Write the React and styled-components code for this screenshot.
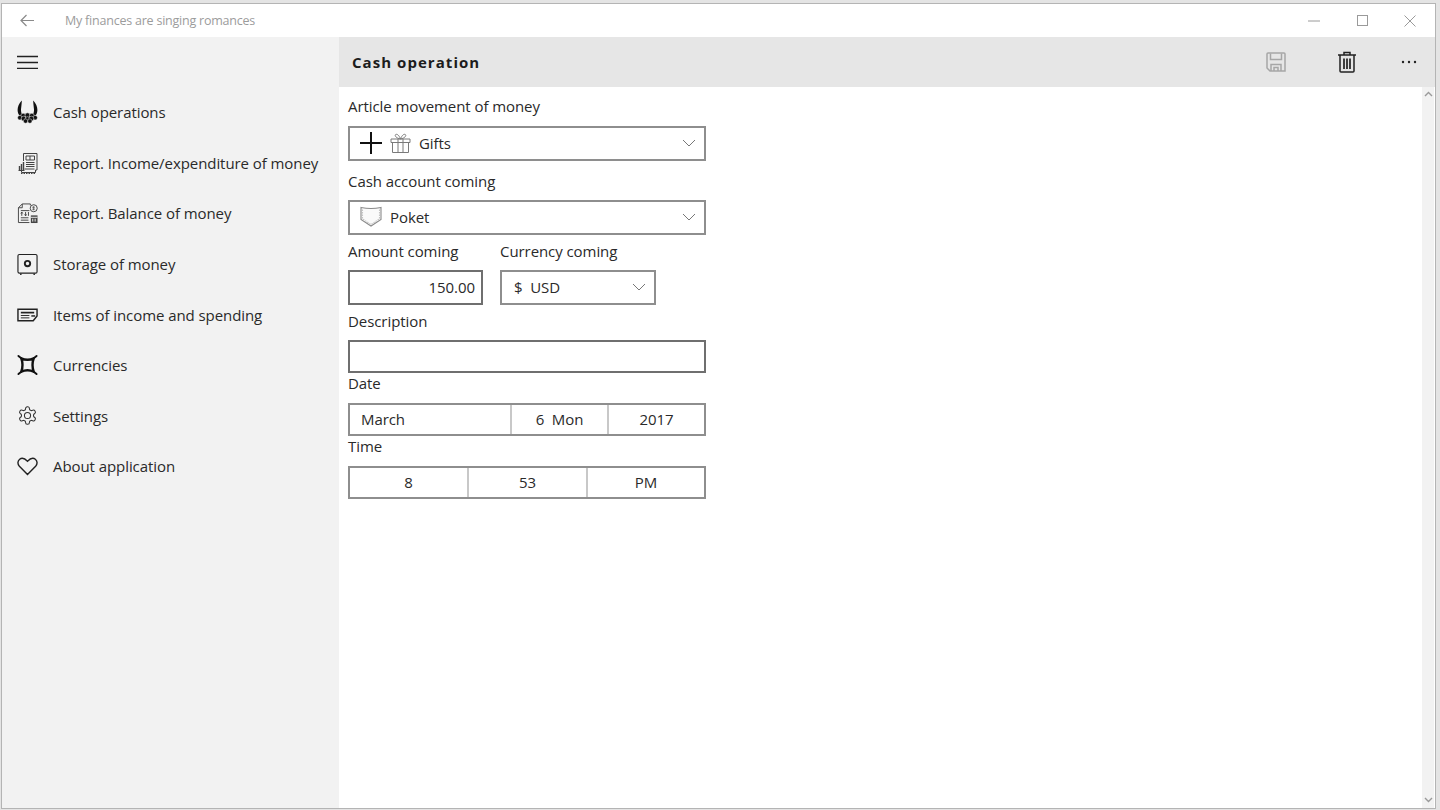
import React from 'react';
import styled, { createGlobalStyle } from 'styled-components';

const Global = createGlobalStyle`
  html, body { margin: 0; height: 100%; background: #e4e4e4; overflow: hidden; }
  * { box-sizing: border-box; }
  #root { height: 100%; }
`;
const Desktop = styled.div`
  height: 810px;
  padding: 4px 5px 2px 2px;
  font-family: 'Open Sans', 'Noto Sans', sans-serif;
  font-size: 15px;
  letter-spacing: -0.07px;
  color: #2a2a2a;
`;
const Window = styled.div`
  height: 100%;
  display: flex;
  flex-direction: column;
  background: #fff;
  box-shadow: 0 0 0 1px #b4b4b4;
`;
const TitleBar = styled.div`
  height: 33px;
  flex: none;
  display: flex;
  align-items: center;
  color: #9c9c9c;
`;
const BackButton = styled.div`
  width: 63px;
  padding-left: 18px;
  display: flex;
  align-items: center;
`;
const AppName = styled.div`
  flex: 1;
  font-size: 12.5px;
  letter-spacing: -0.22px;
  margin-bottom: 1px;
`;
const WindowButtons = styled.div`
  display: flex;
  align-items: center;
  margin-right: 1px;
`;
const WindowButton = styled.div`
  width: 48px;
  display: flex;
  justify-content: center;
`;
const Body = styled.div`
  flex: 1;
  display: flex;
  min-height: 0;
`;
const Sidebar = styled.nav`
  width: 337px;
  flex: none;
  background: #f2f2f2;
`;
const Burger = styled.div`
  height: 50px;
  padding-left: 15px;
  display: flex;
  align-items: center;
`;
const MenuItem = styled.div`
  height: 50.6px;
  display: flex;
  align-items: center;
  gap: 15px;
  padding-left: 15px;
`;
const MenuIcon = styled.span`
  width: 21px;
  height: 24px;
  display: flex;
  align-items: center;
  justify-content: center;
  flex: none;
`;
const Main = styled.main`
  flex: 1;
  display: flex;
  flex-direction: column;
  min-width: 0;
`;
const CommandBar = styled.div`
  height: 50px;
  flex: none;
  background: #e6e6e6;
  display: flex;
  align-items: center;
  padding-left: 13px;
`;
const PageTitle = styled.h1`
  flex: 1;
  margin: 0;
  font-size: 15px;
  font-weight: 700;
  letter-spacing: 1.05px;
  color: #1c1c1c;
`;
const Commands = styled.div`
  display: flex;
  align-items: center;
`;
const Command = styled.div`
  width: ${p => p.$w}px;
  display: flex;
  justify-content: center;
`;
const Scroller = styled.div`
  flex: 1;
  display: flex;
  min-height: 0;
`;
const Form = styled.div`
  flex: 1;
  padding: 9px 0 0 9px;
`;
const Field = styled.div`
  width: ${p => p.$w || 358}px;
`;
const Label = styled.div`
  height: ${p => p.$h || 21}px;
  line-height: 21px;
  white-space: nowrap;
`;
const Box = styled.div`
  height: ${p => p.$h || 35}px;
  border: 2px solid ${p => (p.$dark ? '#6f6f6f' : '#8e8e8e')};
  background: #fff;
  display: flex;
  align-items: center;
  padding: 0 ${p => (p.$right ? 6 : 8)}px 2px ${p => p.$pl || 10}px;
  justify-content: ${p => (p.$right ? 'flex-end' : 'flex-start')};
  margin-bottom: ${p => p.$mb || 0}px;
`;
const BoxText = styled.span`
  flex: ${p => (p.$grow ? 1 : 'none')};
  margin-left: ${p => p.$ml || 0}px;
  white-space: pre;
  display: flex;
`;
const PairRow = styled.div`
  display: flex;
  gap: 17px;
  margin-bottom: 6px;
`;
const SegmentBox = styled.div`
  height: 33px;
  border: 2px solid #8e8e8e;
  display: grid;
  grid-template-columns: ${p => p.$cols};
`;
const Segment = styled.div`
  display: flex;
  align-items: center;
  justify-content: ${p => (p.$left ? 'flex-start' : 'center')};
  padding: 0 0 2px ${p => (p.$left ? 11 : 0)}px;
  white-space: pre;
  & + & { border-left: 2px solid #c8c8c8; }
`;
const Scrollbar = styled.div`
  width: 12px;
  margin-right: 1px;
  flex: none;
  background: #f2f2f2;
  display: flex;
  flex-direction: column;
  justify-content: space-between;
  align-items: center;
  padding: 4px 0 5px;
`;

const Chevron = () => (
  <svg width="14" height="8" viewBox="0 0 14 8" fill="none" stroke="#777" strokeWidth="1">
    <path d="M1 1l6 6 6-6" />
  </svg>
);
const ScrollArrow = ({ up }) => (
  <svg width="9" height="6" viewBox="0 0 9 6" fill="none" stroke="#9a9a9a" strokeWidth="1.4">
    <path d={up ? 'M1 5l3.5-3.5L8 5' : 'M1 1l3.5 3.5L8 1'} />
  </svg>
);

const CashIcon = () => (
  <svg width="22" height="24" viewBox="0 0 22 24" fill="#111">
    <path d="M5 0C1 4-.5 10 1.500 14c1 2 3 3 5.500 3.500-2-2.500-3-5-2.800-8.500C4.400 6 5.200 3 5 0zM17 0c4 4 5.500 10 3.500 14-1 2-3 3-5.500 3.500 2-2.500 3-5 2.800-8.500C17.600 6 16.800 3 17 0z" />
    <g stroke="#f2f2f2" strokeWidth=".5">
      <circle cx="6.500" cy="16" r="2.600" /><circle cx="11" cy="15.500" r="2.600" /><circle cx="15.500" cy="16" r="2.600" />
      <circle cx="3" cy="18" r="2.400" /><circle cx="19" cy="18" r="2.400" />
      <circle cx="7" cy="19" r="2.600" /><circle cx="11" cy="19.500" r="2.600" /><circle cx="15" cy="19" r="2.600" />
      <circle cx="9" cy="21.500" r="2.300" /><circle cx="13.500" cy="21.500" r="2.300" />
    </g>
  </svg>
);
const IncomeReportIcon = () => (
  <svg width="20" height="22" viewBox="0 0 20 22" fill="none" stroke="#444" strokeWidth="1">
    <path d="M5.500 9V1.500h13.500v16.500h-1.500v2.500H3.500v-2" />
    <path d="M8 4h8.500v4H8zM12 4v4M8 10.500h8.500M8 12.500h8.500M8 14.500h8.500M6.500 17h10" />
    <path d="M1.500 18v-4M3.500 18v-6M5.500 18v-8" strokeWidth="1.400" />
    <path d="M.5 18.500h6" />
    <path d="M3 21.500h14" strokeDasharray="1.500 1" />
  </svg>
);
const BalanceReportIcon = () => (
  <svg width="22" height="22" viewBox="0 0 22 22" fill="none" stroke="#444" strokeWidth="1">
    <path d="M14 3V1.500H5.500l-4 4v15.500h11.500" />
    <path d="M5.500 1.500v4h-4" />
    <path d="M4 8.500h9M4 16h8M4 18.500h8" />
    <path d="M5 10v4M5 10l-1 1.500M5 10l1 1.500M9 10v4M9 14l-1-1.500M9 14l1-1.500M12 10v4" />
    <circle cx="17.500" cy="6" r="3.700" />
    <path d="M17.500 3.800v4.400M16 5h2.500M16 7h2.500" strokeWidth=".8" />
    <rect x="14.500" y="13.500" width="7" height="8" fill="#444" stroke="none" />
    <path d="M14.500 15.500h7M16.500 17v3M19 17v3" stroke="#f2f2f2" />
  </svg>
);
const SafeIcon = () => (
  <svg width="22" height="23" viewBox="0 0 22 23" fill="none" stroke="#222">
    <rect x="1" y="1" width="20" height="19.500" rx="1.500" strokeWidth="1.200" />
    <circle cx="11" cy="10.500" r="2.800" strokeWidth="2" />
    <path d="M4 21v1.500M18 21v1.500" strokeWidth="1.500" />
  </svg>
);
const ItemsIcon = () => (
  <svg width="22" height="14" viewBox="0 0 22 14" fill="none" stroke="#222">
    <path d="M1 1h20v7l-4 5H1z" strokeWidth="1.500" />
    <path d="M4 4.500h14" strokeWidth="1.800" />
    <path d="M4 7.500h9M4 10h9" />
    <path d="M15 8h4" strokeWidth="1.500" />
  </svg>
);
const CurrencyIcon = () => (
  <svg width="22" height="22" viewBox="0 0 22 22" fill="none" stroke="#111" strokeWidth="2.500">
    <path d="M4.500 4Q11 7 17.500 4 15 11 17.500 18 11 15 4.500 18 7 11 4.500 4z" strokeLinejoin="round" />
    <path d="M1.500 1.500l3 2.500M20.500 1.500l-3 2.500M1.500 20.500l3-2.500M20.500 20.500l-3-2.500" strokeLinecap="round" strokeWidth="2" />
  </svg>
);
const GearIcon = () => (
  <svg width="25" height="25" viewBox="0 0 24 24" fill="none" stroke="#333" strokeWidth="1.200" strokeLinejoin="round">
    <path d="M12.220 2h-.44a2 2 0 0 0-2 2v.18a2 2 0 0 1-1 1.730l-.43.250a2 2 0 0 1-2 0l-.15-.080a2 2 0 0 0-2.730.730l-.22.380a2 2 0 0 0 .730 2.730l.150.100a2 2 0 0 1 1 1.720v.510a2 2 0 0 1-1 1.740l-.150.090a2 2 0 0 0-.730 2.730l.22.380a2 2 0 0 0 2.730.730l.150-.080a2 2 0 0 1 2 0l.43.250a2 2 0 0 1 1 1.730V20a2 2 0 0 0 2 2h.44a2 2 0 0 0 2-2v-.18a2 2 0 0 1 1-1.730l.43-.250a2 2 0 0 1 2 0l.150.080a2 2 0 0 0 2.730-.730l.22-.390a2 2 0 0 0-.730-2.730l-.150-.080a2 2 0 0 1-1-1.740v-.500a2 2 0 0 1 1-1.740l.150-.090a2 2 0 0 0 .730-2.730l-.22-.380a2 2 0 0 0-2.730-.730l-.150.080a2 2 0 0 1-2 0l-.43-.250a2 2 0 0 1-1-1.730V4a2 2 0 0 0-2-2z" />
    <circle cx="12" cy="12" r="3.500" />
  </svg>
);
const HeartIcon = () => (
  <svg width="22" height="19" viewBox="0 0 22 19" fill="none" stroke="#222" strokeWidth="1.500">
    <path d="M11 17.800L2.500 9.300C.3 7 .6 3.600 2.800 1.900c2.300-1.700 5.200-1 8.200 2.100 3-3.100 5.900-3.800 8.200-2.100 2.200 1.700 2.500 5.100.3 7.400z" />
  </svg>
);

const GiftIcon = () => (
  <svg width="21" height="20" viewBox="0 0 21 20" fill="none" stroke="#7a7a7a" strokeWidth="1">
    <path d="M1 6h19v3.500H1zM2.500 9.500v10h16v-10M8 6v13.500M13 6v13.500" />
    <path d="M10.500 6C9 2 7 .8 5.700 1.500 4.500 2.300 5.500 5 10.500 6zM10.500 6c1.500-4 3.500-5.200 4.800-4.500 1.200.8.200 3.500-4.800 4.500z" />
  </svg>
);
const PocketIcon = () => (
  <svg width="22" height="21" viewBox="0 0 22 21" fill="#fafafa" stroke="#8a8a8a" strokeWidth="1.100">
    <path d="M1 1.500c6 1.200 14 1.200 20 0v12L11 20 1 13.500z" />
    <path d="M2.500 3.500v9.300L11 18.500l8.500-5.700V3.500" fill="none" stroke="#c4c4c4" strokeDasharray="1.500 1" />
  </svg>
);
const PlusIcon = () => (
  <svg width="22" height="22" viewBox="0 0 22 22" stroke="#111" strokeWidth="2">
    <path d="M0 11h22M11 0v22" />
  </svg>
);
const SaveIcon = () => (
  <svg width="20" height="20" viewBox="0 0 20 20" fill="none" stroke="#a6a6a6" strokeWidth="1.500">
    <path d="M1 2a1 1 0 0 1 1-1h16a1 1 0 0 1 1 1v17H4l-3-3z" />
    <path d="M4.500 1.500v6h11v-6M5 19v-6.500h10V19" />
    <path d="M8 19v-3.500h4V19" />
  </svg>
);
const TrashIcon = () => (
  <svg width="18" height="22" viewBox="0 0 18 22" fill="none" stroke="#222" strokeWidth="1.500">
    <path d="M0 4h18M6 4V1.500h6V4M2 4v16a1 1 0 0 0 1 1h12a1 1 0 0 0 1-1V4" />
    <path d="M6 7.500V18M9 7.500V18M12 7.500V18" strokeWidth="1.700" />
  </svg>
);
const Dots = () => (
  <svg width="16" height="4" viewBox="0 0 16 4" fill="#222">
    <circle cx="2" cy="2" r="1.200" /><circle cx="8" cy="2" r="1.200" /><circle cx="14" cy="2" r="1.200" />
  </svg>
);

const menu = [
  ['Cash operations', CashIcon],
  ['Report. Income/expenditure of money', IncomeReportIcon],
  ['Report. Balance of money', BalanceReportIcon],
  ['Storage of money', SafeIcon],
  ['Items of income and spending', ItemsIcon],
  ['Currencies', CurrencyIcon],
  ['Settings', GearIcon],
  ['About application', HeartIcon],
];

export default function App() {
  return (
    <>
      <Global />
      <Desktop>
        <Window>
          <TitleBar>
            <BackButton>
              <svg width="14" height="13" viewBox="0 0 14 13" fill="none" stroke="#8a8a8a" strokeWidth="1.200">
                <path d="M14 6.500H1M6.500 1L1 6.500 6.500 12" />
              </svg>
            </BackButton>
            <AppName>My finances are singing romances</AppName>
            <WindowButtons>
              <WindowButton>
                <svg width="12" height="2" viewBox="0 0 12 2" stroke="#9a9a9a"><path d="M0 1h12" /></svg>
              </WindowButton>
              <WindowButton>
                <svg width="11" height="11" viewBox="0 0 11 11" fill="none" stroke="#9a9a9a"><rect x=".5" y=".5" width="10" height="10" /></svg>
              </WindowButton>
              <WindowButton>
                <svg width="12" height="12" viewBox="0 0 12 12" stroke="#9a9a9a"><path d="M.5.500l11 11M11.500.500l-11 11" /></svg>
              </WindowButton>
            </WindowButtons>
          </TitleBar>
          <Body>
            <Sidebar>
              <Burger>
                <svg width="21" height="14" viewBox="0 0 21 14" stroke="#222" strokeWidth="1.500">
                  <path d="M0 1.500h21M0 7.500h21M0 13.500h21" />
                </svg>
              </Burger>
              {menu.map(([text, Icon]) => (
                <MenuItem key={text}>
                  <MenuIcon><Icon /></MenuIcon>
                  <span>{text}</span>
                </MenuItem>
              ))}
            </Sidebar>
            <Main>
              <CommandBar>
                <PageTitle>Cash operation</PageTitle>
                <Commands>
                  <Command $w={70}><SaveIcon /></Command>
                  <Command $w={71}><TrashIcon /></Command>
                  <Command $w={53}><Dots /></Command>
                </Commands>
              </CommandBar>
              <Scroller>
                <Form>
                  <Field>
                    <Label $h={30}>Article movement of money</Label>
                    <Box $pl={10} $mb={10}>
                      <PlusIcon />
                      <BoxText $ml={8}><GiftIcon /></BoxText>
                      <BoxText $grow $ml={8}>Gifts</BoxText>
                      <Chevron />
                    </Box>
                    <Label $h={29}>Cash account coming</Label>
                    <Box $pl={10} $mb={6}>
                      <PocketIcon />
                      <BoxText $grow $ml={8}>Poket</BoxText>
                      <Chevron />
                    </Box>
                  </Field>
                  <PairRow>
                    <Field $w={135}>
                      <Label $h={29}>Amount coming</Label>
                      <Box $dark $right>150.00</Box>
                    </Field>
                    <Field $w={156}>
                      <Label $h={29}>Currency coming</Label>
                      <Box $pl={12}>
                        <BoxText $grow>$  USD</BoxText>
                        <Chevron />
                      </Box>
                    </Field>
                  </PairRow>
                  <Field>
                    <Label $h={29}>Description</Label>
                    <Box $dark $h={33}></Box>
                    <Label $h={30}>Date</Label>
                    <SegmentBox $cols="160px 97px 1fr">
                      <Segment $left>March</Segment>
                      <Segment>6  Mon</Segment>
                      <Segment>2017</Segment>
                    </SegmentBox>
                    <Label $h={30}>Time</Label>
                    <SegmentBox $cols="117px 119px 1fr">
                      <Segment>8</Segment>
                      <Segment>53</Segment>
                      <Segment>PM</Segment>
                    </SegmentBox>
                  </Field>
                </Form>
                <Scrollbar>
                  <ScrollArrow up />
                  <ScrollArrow />
                </Scrollbar>
              </Scroller>
            </Main>
          </Body>
        </Window>
      </Desktop>
    </>
  );
}
